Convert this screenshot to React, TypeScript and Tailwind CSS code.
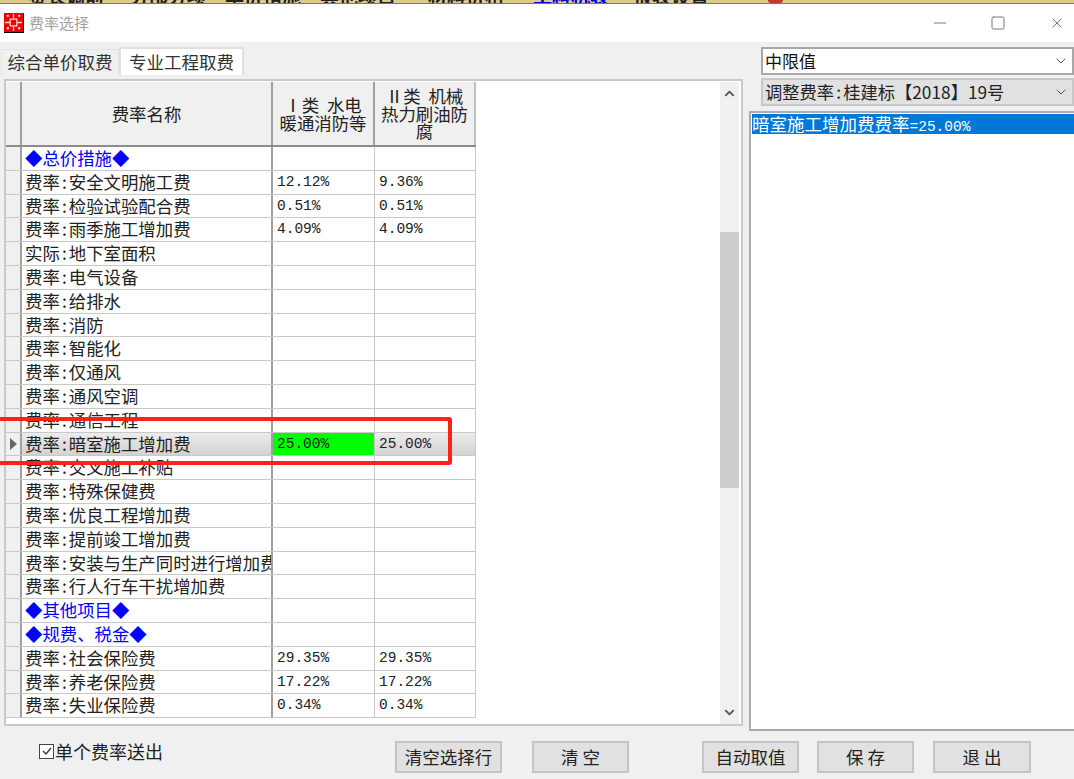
import { ChevronDown, ChevronUp, Minus, Square, X } from "lucide-react";

const FONT = "font-['Noto_Sans_CJK_SC','Liberation_Sans',sans-serif]";
const MONO = "font-['Liberation_Mono',monospace]";

interface Row {
  name: string;
  a?: string;
  b?: string;
  group?: boolean;
  current?: boolean;
}

const rows: Row[] = [
  { name: "◆总价措施◆", group: true },
  { name: "费率:安全文明施工费", a: "12.12%", b: "9.36%" },
  { name: "费率:检验试验配合费", a: "0.51%", b: "0.51%" },
  { name: "费率:雨季施工增加费", a: "4.09%", b: "4.09%" },
  { name: "实际:地下室面积" },
  { name: "费率:电气设备" },
  { name: "费率:给排水" },
  { name: "费率:消防" },
  { name: "费率:智能化" },
  { name: "费率:仅通风" },
  { name: "费率:通风空调" },
  { name: "费率:通信工程" },
  { name: "费率:暗室施工增加费", a: "25.00%", b: "25.00%", current: true },
  { name: "费率:交叉施工补贴" },
  { name: "费率:特殊保健费" },
  { name: "费率:优良工程增加费" },
  { name: "费率:提前竣工增加费" },
  { name: "费率:安装与生产同时进行增加费" },
  { name: "费率:行人行车干扰增加费" },
  { name: "◆其他项目◆", group: true },
  { name: "◆规费、税金◆", group: true },
  { name: "费率:社会保险费", a: "29.35%", b: "29.35%" },
  { name: "费率:养老保险费", a: "17.22%", b: "17.22%" },
  { name: "费率:失业保险费", a: "0.34%", b: "0.34%" },
];

// the colon in the old dialog font sits in a half-width cell
function RateName({ name }: { name: string }) {
  const idx = name.indexOf(":");
  if (idx < 0) return <>{name}</>;
  return (
    <>
      {name.slice(0, idx)}
      <span className="inline-block w-[9px] text-center">:</span>
      {name.slice(idx + 1)}
    </>
  );
}

function GridRow({ row }: { row: Row }) {
  const rowBg = row.current ? "bg-gradient-to-b from-[#ececec] to-[#d2d2d2]" : "bg-white";
  return (
    <div className={`flex h-[23.8px] border-b border-[#c8c8c8] ${rowBg}`}>
      <div className="flex w-[16px] shrink-0 items-center justify-center border-r-2 border-[#a0a0a0] bg-[#f0f0f0]">
        {row.current && <div className="h-0 w-0 border-y-[6px] border-l-[7px] border-y-transparent border-l-[#666]" />}
      </div>
      <div
        className={`w-[251px] shrink-0 overflow-hidden whitespace-nowrap border-r-2 border-[#a0a0a0] pl-[3px] text-[17.4px] leading-[22px] ${
          row.group ? "text-[#0000ff]" : "text-[#222]"
        }`}
      >
        <RateName name={row.name} />
      </div>
      <div
        className={`w-[102px] shrink-0 border-r border-[#c8c8c8] pl-[4px] text-[14.5px] leading-[23px] text-[#222] ${MONO} ${
          row.current ? "bg-[#00ff00]" : ""
        }`}
      >
        {row.a}
      </div>
      <div className={`w-[101px] shrink-0 border-r border-[#c8c8c8] pl-[4px] text-[14.5px] leading-[23px] text-[#222] ${MONO}`}>
        {row.b}
      </div>
    </div>
  );
}

function FlatButton({ label, className }: { label: string; className: string }) {
  return (
    <button className={`h-[32px] border-2 border-[#c4c4c4] bg-[#e1e1e1] text-[17.5px] leading-none text-[#222] ${className}`}>
      {label}
    </button>
  );
}

export default function App() {
  return (
    <div className={`relative flex h-[779px] w-[1074px] flex-col overflow-hidden bg-[#f0f0f0] ${FONT}`}>
      {/* sliver of the window behind, only the feet of its menu text show */}
      <div className="flex h-[4px] shrink-0 items-end overflow-hidden border-b border-[#8a7a48] bg-[#dccb8e] pl-[28px] text-[19px] font-bold leading-[15px] text-[#222]">
        <span className="w-[102px] shrink-0">赛长调前</span>
        <span className="w-[95px] shrink-0">分部分项</span>
        <span className="w-[95px] shrink-0">单价措施</span>
        <span className="w-[108px] shrink-0">其他项目</span>
        <span className="w-[105px] shrink-0">材料价格</span>
        <span className="w-[100px] shrink-0 text-[#0000dd]">工料机表</span>
        <span className="w-[135px] shrink-0">报表设置</span>
        <span className="h-[6px] w-[15px] shrink-0 rounded-full bg-[#c0392b]" />
      </div>

      {/* title bar */}
      <div className="flex h-[38px] shrink-0 items-center bg-white pl-[4px]">
        <div className="h-[20px] w-[20px] border-b border-r border-black bg-[#f20000]">
          <svg viewBox="0 0 20 20" className="h-[19px] w-[19px]" fill="none" stroke="#ffd0d0" strokeWidth="1.4">
            <path d="M10 1v5M10 14v5M1 10h5M14 10h5M6.5 6.5h7v7h-7z" />
            <path d="M3 3h2M15 3h2M3 16h2M15 16h2" stroke="white" strokeWidth="2" />
          </svg>
        </div>
        <span className="ml-[5px] text-[15px] text-[#a0a0a0]">费率选择</span>
        <div className="ml-auto flex items-center pr-[9px] text-[#777]">
          <Minus size={20} strokeWidth={1} absoluteStrokeWidth />
          <Square size={16} strokeWidth={1} absoluteStrokeWidth className="ml-[40px]" />
          <X size={16} strokeWidth={1} absoluteStrokeWidth className="ml-[43px]" />
        </div>
      </div>

      <div className="flex min-h-0 flex-1">
        {/* left: tabs and grid */}
        <div className="flex w-[749px] shrink-0 flex-col pl-[1px] pt-[5px]">
          <div className="flex h-[28px] items-end text-[17.5px] text-[#333]">
            <div className="flex h-[26px] w-[118px] items-center justify-center border border-b-0 border-[#e4e4e4] bg-[#f0f0f0]">
              综合单价取费
            </div>
            <div className="flex h-[28px] w-[125px] items-center justify-center border-2 border-b-0 border-[#e0e0e0] bg-white">
              专业工程取费
            </div>
          </div>
          <div className="ml-[3px] mt-[4px] flex h-[647px] w-[739px] border-2 border-[#c9c9c9] bg-white pr-[2px] pt-px">
            <div className="w-[470px] shrink-0">
              <div className="flex h-[65px] border-b-2 border-[#8c8c8c] bg-[#f0f0f0] text-center text-[17.4px] leading-[17.5px] text-[#222]">
                <div className="w-[16px] shrink-0 border-r-2 border-[#a0a0a0]" />
                <div className="flex w-[251px] shrink-0 items-center justify-center border-r-2 border-[#a0a0a0]">费率名称</div>
                <div className="flex w-[102px] shrink-0 items-center justify-center border-r-2 border-[#a0a0a0]">
                  <span>
                    Ⅰ类&nbsp;&nbsp;水电
                    <br />
                    暖通消防等
                  </span>
                </div>
                <div className="flex w-[101px] shrink-0 items-center justify-center border-r-2 border-[#c0c0c0]">
                  <span>
                    Ⅱ类&nbsp;&nbsp;机械
                    <br />
                    热力刷油防
                    <br />腐
                  </span>
                </div>
              </div>
              {rows.map((row) => (
                <GridRow key={row.name} row={row} />
              ))}
            </div>
            <div className="flex-1" />
            {/* scrollbar */}
            <div className="flex w-[19px] shrink-0 flex-col items-center bg-[#f0f0f0] pb-[4px] pt-[4px] text-[#555]">
              <ChevronUp size={15} strokeWidth={3} />
              <div className="mt-[131px] h-[256px] w-full bg-[#cdcdcd]" />
              <ChevronDown size={15} strokeWidth={3} className="mt-auto" />
            </div>
          </div>
        </div>

        {/* right: selects and list */}
        <div className="flex min-w-0 flex-1 flex-col pt-[5px]">
          <div className="ml-[12px] flex h-[28px] items-center justify-between border-2 border-[#a8a8a8] bg-white pl-[2px] pr-[3px] text-[17px] text-[#111]">
            中限值
            <ChevronDown size={16} strokeWidth={1.5} className="text-[#555]" />
          </div>
          <div className="ml-[12px] mt-[3px] flex h-[28px] items-center justify-between border-2 border-[#c8c8c8] bg-[#e1e1e1] pl-[2px] pr-[3px] text-[17.3px] text-[#222]">
            <span>
              调整费率<span className="inline-block w-[9px] text-center">:</span>桂建标【2018】19号
            </span>
            <ChevronDown size={16} strokeWidth={1.5} className="text-[#555]" />
          </div>
          <div className="mt-[5px] h-[621px] border-2 border-r-0 border-[#a8adb5] bg-white pl-[1px] pt-[1px]">
            <div className="h-[20px] bg-[#0078d7] text-[17.5px] leading-[20px] text-white">
              暗室施工增加费费率<span className={`text-[14.5px] ${MONO}`}>=25.00%</span>
            </div>
          </div>
        </div>
      </div>

      {/* bottom buttons */}
      <div className="flex h-[48px] shrink-0 items-start pt-[10px]">
        <label className="ml-[39px] mt-[1px] flex items-center gap-[1px] text-[18px] leading-none text-[#222]">
          <span className="flex h-[15px] w-[15px] items-center justify-center border border-[#444] bg-white">
            <svg viewBox="0 0 12 12" className="h-[12px] w-[12px]" fill="none" stroke="#333" strokeWidth="1.3">
              <path d="M2 6l3 3 5-6" />
            </svg>
          </span>
          单个费率送出
        </label>
        <FlatButton label="清空选择行" className="ml-[232px] w-[107px]" />
        <FlatButton label="清  空" className="ml-[30px] w-[97px]" />
        <FlatButton label="自动取值" className="ml-[73px] w-[97px]" />
        <FlatButton label="保  存" className="ml-[18px] w-[97px]" />
        <FlatButton label="退  出" className="ml-[19px] w-[98px]" />
      </div>

      {/* red annotation over the selected row */}
      <div className="absolute left-[-4px] top-[417px] h-[48px] w-[456px] rounded-[3px] border-[4px] border-[#fa2314]" />
    </div>
  );
}
